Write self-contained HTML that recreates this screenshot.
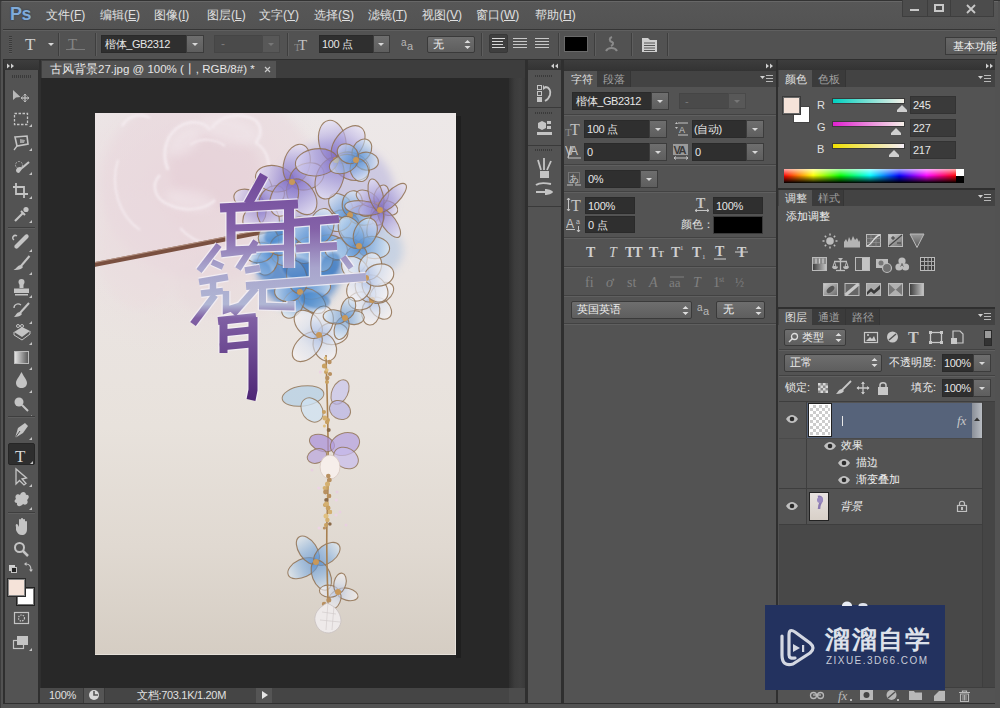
<!DOCTYPE html>
<html><head><meta charset="utf-8">
<style>
*{margin:0;padding:0;box-sizing:border-box}
html,body{width:1000px;height:708px;overflow:hidden;background:#535353;font-family:"Liberation Sans",sans-serif;font-size:12px;color:#e0e0e0}
.a{position:absolute}
.t{position:absolute;white-space:nowrap;line-height:1}
.inp{position:absolute;background:#383838;border:1px solid #2e2e2e}
.btn{position:absolute;background:linear-gradient(#6e6e6e,#5e5e5e);border:1px solid #3c3c3c}
.arr{position:absolute;width:0;height:0;border-left:3px solid transparent;border-right:3px solid transparent;border-top:3px solid #d8d8d8}
.hdr{position:absolute;background:linear-gradient(#3d3d3d,#333)}
.tabs{position:absolute;background:#434343}
.tab{position:absolute;background:#535353;color:#e6e6e6}
.itab{position:absolute;background:#3b3b3b;color:#a8a8a8;border-right:1px solid #353535}
.sepH{position:absolute;height:2px;border-top:1px solid #424242;border-bottom:1px solid #5f5f5f}
</style></head><body>

<!-- window frame -->
<div class="a" style="left:0;top:0;width:1000px;height:708px;background:#525252;border-left:1px solid #3c3c3c"></div>
<!-- menu bar -->
<div class="a" style="left:0;top:0;width:1000px;height:1px;background:#333"></div>
<div class="a" style="left:2px;top:1px;width:996px;height:28px;background:linear-gradient(#575757,#535353);border-top:1px solid #676767"></div>
<!-- options bar -->
<div class="a" style="left:3px;top:29px;width:992px;height:30px;background:#525252;border-top:1px solid #353535;box-shadow:inset 0 1px #5f5f5f"></div>
<!-- dark strip under options bar -->
<div class="a" style="left:3px;top:59px;width:992px;height:645px;background:#2f2f2f"></div>

<!-- left tool panel -->
<div class="hdr" style="left:4px;top:60px;width:35px;height:10px"></div>
<div class="a" style="left:5px;top:70px;width:33px;height:633px;background:#535353"></div>

<!-- doc tab bar -->
<div class="a" style="left:41px;top:60px;width:484px;height:18px;background:#3d3d3d"></div>
<div class="a" style="left:42px;top:61px;width:234px;height:17px;background:#535353"></div>
<!-- canvas area -->
<div class="a" style="left:41px;top:78px;width:468px;height:610px;background:#282828"></div>
<!-- vertical scrollbar -->
<div class="a" style="left:509px;top:78px;width:16px;height:610px;background:linear-gradient(90deg,#2e2e2e,#3c3c3c 35%,#404040 70%,#3a3a3a)"></div>
<!-- status bar -->
<div class="a" style="left:40px;top:688px;width:485px;height:15px;background:#454545"></div>

<!-- icon column -->
<div class="hdr" style="left:528px;top:60px;width:33px;height:10px"></div>
<div class="a" style="left:528px;top:70px;width:33px;height:633px;background:#535353"></div>

<!-- character panel -->
<div class="hdr" style="left:564px;top:60px;width:212px;height:11px"></div>
<div class="tabs" style="left:564px;top:71px;width:212px;height:16px"></div>
<div class="a" style="left:564px;top:87px;width:212px;height:616px;background:#535353"></div>

<!-- right panels -->
<div class="hdr" style="left:778px;top:60px;width:217px;height:10px"></div>
<div class="tabs" style="left:778px;top:70px;width:217px;height:17px"></div>
<div class="a" style="left:778px;top:87px;width:217px;height:101px;background:#535353"></div>
<div class="tabs" style="left:778px;top:190px;width:217px;height:16px"></div>
<div class="a" style="left:778px;top:206px;width:217px;height:101px;background:#535353"></div>
<div class="tabs" style="left:778px;top:309px;width:217px;height:16px"></div>
<div class="a" style="left:778px;top:325px;width:217px;height:378px;background:#535353"></div>


<!-- PS logo -->
<div class="t" style="left:10px;top:5px;font-size:18px;font-weight:bold;color:#80aad8;letter-spacing:-0.6px;text-shadow:0 0 1.5px #1a3050">Ps</div>
<div class="t" style="left:46px;top:9px">文件(<u>F</u>)</div>
<div class="t" style="left:100px;top:9px">编辑(<u>E</u>)</div>
<div class="t" style="left:154px;top:9px">图像(<u>I</u>)</div>
<div class="t" style="left:207px;top:9px">图层(<u>L</u>)</div>
<div class="t" style="left:259px;top:9px">文字(<u>Y</u>)</div>
<div class="t" style="left:314px;top:9px">选择(<u>S</u>)</div>
<div class="t" style="left:368px;top:9px">滤镜(<u>T</u>)</div>
<div class="t" style="left:422px;top:9px">视图(<u>V</u>)</div>
<div class="t" style="left:476px;top:9px">窗口(<u>W</u>)</div>
<div class="t" style="left:535px;top:9px">帮助(<u>H</u>)</div>
<!-- window buttons -->
<div class="a" style="left:902px;top:0px;width:92px;height:17px;border:1px solid #3e3e3e;border-top:none;background:#4c4c4c"></div>
<div class="a" style="left:927px;top:0px;width:1px;height:16px;background:#3e3e3e"></div>
<div class="a" style="left:950px;top:0px;width:1px;height:16px;background:#3e3e3e"></div>
<div class="a" style="left:910px;top:9px;width:9px;height:2px;background:#c8c8c8"></div>
<div class="a" style="left:934px;top:4px;width:10px;height:8px;border:2px solid #c8c8c8"></div>
<svg class="a" style="left:966px;top:4px" width="10" height="10"><path d="M1 1L9 9M9 1L1 9" stroke="#c8c8c8" stroke-width="1.8"/></svg>


<!-- options bar -->
<div class="a" style="left:9px;top:36px;width:3px;height:18px;background:repeating-linear-gradient(#3a3a3a 0 1px,#5a5a5a 1px 2px)"></div>
<div class="t" style="left:25px;top:36px;font-family:'Liberation Serif',serif;font-size:17px;color:#d0d0d0">T</div>
<div class="arr" style="left:48px;top:43px"></div>
<div class="a" style="left:58px;top:33px;width:1px;height:23px;background:#3e3e3e;box-shadow:1px 0 #5e5e5e"></div>
<div class="t" style="left:68px;top:37px;font-family:'Liberation Serif',serif;font-size:15px;color:#858585">T</div>
<div class="a" style="left:66px;top:49px;width:19px;height:1px;background:#7a7a7a"></div>
<div class="a" style="left:95px;top:33px;width:1px;height:23px;background:#3e3e3e;box-shadow:1px 0 #5e5e5e"></div>
<!-- font family -->
<div class="inp" style="left:101px;top:35px;width:86px;height:18px;background:#2f2f2f;border-color:#2a2a2a"></div>
<div class="t" style="left:105px;top:39px;color:#e6e6e6;font-size:11px;letter-spacing:-0.4px">楷体_GB2312</div>
<div class="btn" style="left:186px;top:35px;width:18px;height:18px"></div>
<div class="arr" style="left:192px;top:43px"></div>
<!-- style disabled -->
<div class="inp" style="left:214px;top:35px;width:49px;height:18px;background:#4a4a4a;border-color:#454545"></div>
<div class="t" style="left:221px;top:38px;color:#7a7a7a">-</div>
<div class="btn" style="left:262px;top:35px;width:18px;height:18px;background:#585858;border-color:#4a4a4a"></div>
<div class="arr" style="left:268px;top:43px;border-top-color:#777"></div>
<div class="a" style="left:287px;top:33px;width:1px;height:23px;background:#3e3e3e;box-shadow:1px 0 #5e5e5e"></div>
<!-- size -->
<svg class="a" style="left:294px;top:37px" width="17" height="15"><text x="0" y="14" font-family="Liberation Serif" font-size="11" fill="#8a8a8a">T</text><text x="4" y="13" font-family="Liberation Serif" font-size="15" fill="#c0c0c0">T</text></svg>
<div class="inp" style="left:319px;top:35px;width:55px;height:18px;background:#2f2f2f;border-color:#2a2a2a"></div>
<div class="t" style="left:322px;top:39px;color:#e6e6e6;font-size:11px;letter-spacing:-0.4px">100 点</div>
<div class="btn" style="left:373px;top:35px;width:17px;height:18px"></div>
<div class="arr" style="left:378px;top:43px"></div>
<!-- aa -->
<svg class="a" style="left:401px;top:38px" width="14" height="13"><text x="0" y="8" font-family="Liberation Sans" font-size="10" fill="#b8b8b8">a</text><text x="6" y="12" font-family="Liberation Sans" font-size="11" fill="#b8b8b8">a</text></svg>
<div class="btn" style="left:427px;top:36px;width:48px;height:17px;border-radius:2px;border-color:#3a3a3a"></div>
<div class="t" style="left:433px;top:39px;color:#eee;font-size:11px">无</div>
<svg class="a" style="left:464px;top:39px" width="7" height="11"><path d="M0.5 4L3.5 1L6.5 4ZM0.5 7L3.5 10L6.5 7Z" fill="#dcdcdc"/></svg>
<div class="a" style="left:481px;top:33px;width:1px;height:23px;background:#3e3e3e;box-shadow:1px 0 #5e5e5e"></div>
<!-- align -->
<div class="a" style="left:489px;top:34px;width:19px;height:19px;background:#3f3f3f;border:1px solid #383838;border-radius:2px"></div>
<div class="a" style="left:492px;top:38px;width:13px;height:11px;background:repeating-linear-gradient(#d8d8d8 0 1px,transparent 1px 3px)"></div>
<div class="a" style="left:503px;top:40px;width:2px;height:7px;background:#3f3f3f"></div>
<div class="a" style="left:513px;top:38px;width:14px;height:11px;background:repeating-linear-gradient(#c8c8c8 0 1px,transparent 1px 3px)"></div>
<div class="a" style="left:535px;top:38px;width:14px;height:11px;background:repeating-linear-gradient(#c8c8c8 0 1px,transparent 1px 3px)"></div>
<div class="a" style="left:558px;top:33px;width:1px;height:23px;background:#3e3e3e;box-shadow:1px 0 #5e5e5e"></div>
<div class="a" style="left:564px;top:36px;width:24px;height:16px;background:#000;border:1px solid #6a6a6a"></div>
<div class="a" style="left:594px;top:33px;width:1px;height:23px;background:#3e3e3e;box-shadow:1px 0 #5e5e5e"></div>
<svg class="a" style="left:604px;top:35px" width="15" height="18"><path d="M8 2 C5 3 5 6 8 7 C10 8 9 10 7 11 M2 16 C4 12 11 12 13 16" stroke="#8a8a8a" stroke-width="2" fill="none"/></svg>
<div class="a" style="left:631px;top:33px;width:1px;height:23px;background:#3e3e3e;box-shadow:1px 0 #5e5e5e"></div>
<svg class="a" style="left:641px;top:37px" width="17" height="16"><path d="M1 1H7L9 3H16V15H1Z" fill="#cfcfcf"/><path d="M3 6H14M3 8.5H14M3 11H14M3 13.5H14" stroke="#555" stroke-width="1"/></svg>
<div class="a" style="left:667px;top:33px;width:1px;height:23px;background:#3e3e3e;box-shadow:1px 0 #5e5e5e"></div>
<!-- workspace button -->
<div class="btn" style="left:945px;top:37px;width:52px;height:18px;border-color:#3a3a3a;background:linear-gradient(#666,#5a5a5a)"></div>
<div class="t" style="left:953px;top:41px;color:#f0f0f0;font-size:11px">基本功能</div>


<!-- left toolbar content -->
<svg class="a" style="left:6px;top:63px" width="10" height="6"><path d="M1 0.5L4 3L1 5.5ZM5 0.5L8 3L5 5.5Z" fill="#cfcfcf"/></svg>
<div class="a" style="left:12px;top:75px;width:19px;height:3px;background:repeating-linear-gradient(90deg,#3a3a3a 0 1px,transparent 1px 2px)"></div>
<svg class="a" style="left:5px;top:84px" width="33" height="580" fill="#c4c4c4" stroke="#c4c4c4">
 <g transform="translate(0,0)">
  <!-- move y95 -->
  <path d="M8 6L8 16L11 13.5L15.5 13Z" stroke="none" fill="#b8b8b8"/>
  <path d="M20 10V18M16 14H24" stroke-width="1.3" fill="none" stroke="#b8b8b8"/>
  <path d="M18.5 11.5L20 10L21.5 11.5M18.5 16.5L20 18L21.5 16.5M17.5 12.5L16 14L17.5 15.5M22.5 12.5L24 14L22.5 15.5" stroke-width="1" fill="none" stroke="#b8b8b8"/>
  <!-- marquee y119 -->
  <rect x="9.5" y="29.5" width="13" height="11" fill="none" stroke-width="1.3" stroke-dasharray="2.5 1.5"/>
  <path d="M24 43H27V40Z" stroke="none"/>
  <!-- lasso y143 -->
  <path d="M10 53L22 52L23 60L12 62Z" fill="none" stroke-width="1.6"/>
  <path d="M12 62L9 66" stroke-width="1.3"/>
  <path d="M15 55L20 56L19 59L15 59Z" stroke="none" opacity="0.7"/>
  <path d="M24 67H27V64Z" stroke="none"/>
  <!-- quick selection y167 -->
  <path d="M11 86C12 83 15 82 18 84L14 89C12 89 11 88 11 86Z" stroke="none"/>
  <path d="M17 84L24 78" stroke-width="2.2"/>
  <circle cx="14" cy="81" r="3.5" fill="none" stroke-width="1" stroke-dasharray="2 1" opacity="0.7"/>
  <path d="M24 91H27V88Z" stroke="none"/>
  <!-- crop y190 -->
  <path d="M11 99V110H23M8 103H19V114" fill="none" stroke-width="1.8"/>
  <path d="M24 115H27V112Z" stroke="none"/>
  <!-- eyedropper y214 -->
  <path d="M10 137L18 129" stroke-width="2.2"/>
  <path d="M16 127L20 131" stroke-width="2"/>
  <circle cx="21" cy="125.5" r="2.6" stroke="none"/>
  <path d="M24 139H27V136Z" stroke="none"/>
 </g>
</svg>
<div class="a" style="left:8px;top:227px;width:27px;height:1px;background:#3e3e3e;box-shadow:0 1px #5e5e5e"></div>
<svg class="a" style="left:5px;top:228px" width="33" height="200" fill="#c4c4c4" stroke="#c4c4c4">
  <!-- healing y240 -->
  <path d="M10 17L20 7C22 5 25 8 23 10L13 20C11 22 8 19 10 17Z" stroke="none"/>
  <path d="M12 8C9 6 6 10 9 12" fill="none" stroke-width="1.5"/>
  <path d="M24 24H27V21Z" stroke="none"/>
  <!-- brush y263 -->
  <path d="M24.5 28L16 38" stroke-width="2"/>
  <path d="M16 37C13 37 12 40 8.5 42C13 42.5 17 41 18 39Z" stroke="none"/>
  <path d="M24 47H27V44Z" stroke="none"/>
  <!-- stamp y287 -->
  <path d="M14.5 55H18.5V60H14.5Z M9 60.5H24V65H9Z M10 66H23V67.5H10Z" stroke="none"/>
  <circle cx="16.5" cy="54" r="3" stroke="none"/>
  <path d="M24 70H27V67Z" stroke="none"/>
  <g transform="translate(0,2)"><!-- history brush y310 -->
  <path d="M24 73L15 83" stroke-width="2"/>
  <path d="M15 82C12 82 11 85 9 87C13 87 16 86 17 84Z" stroke="none"/>
  <path d="M9 78C9 74 13 73 16 75" fill="none" stroke-width="1.3"/>
  <path d="M24 94H27V91Z" stroke="none"/>
  </g><!-- eraser y333 -->
  <path d="M9 104L17 99L25 103L17 109Z" stroke="none"/>
  <path d="M9 104V107L17 112L25 106V103" fill="none" stroke-width="1"/>
  <circle cx="13" cy="98" r="1.5" fill="none" stroke-width="1"/><circle cx="17" cy="98" r="1.5" fill="none" stroke-width="1"/>
  <path d="M24 117H27V114Z" stroke="none"/>
  <g transform="translate(0,2)"><!-- gradient y356 -->
  <defs><linearGradient id="gg" x1="0" y1="0" x2="1" y2="0"><stop offset="0" stop-color="#e8e8e8"/><stop offset="1" stop-color="#555"/></linearGradient></defs>
  <rect x="9.5" y="121.5" width="14" height="12" fill="url(#gg)" stroke-width="1" stroke="#bbb"/>
  <path d="M24 140H27V137Z" stroke="none"/>
  </g><g transform="translate(0,1)"><!-- blur drop y379 -->
  <path d="M16.5 143C14 148 11 151 11 154C11 157 13.5 159 16.5 159C19.5 159 22 157 22 154C22 151 19 148 16.5 143Z" stroke="none"/>
  <path d="M24 164H27V161Z" stroke="none"/>
  </g><g transform="translate(0,3)"><!-- dodge y403 -->
  <circle cx="14" cy="171" r="4.5" stroke="none"/>
  <path d="M17 174L23 180" stroke-width="2"/>
  <path d="M24 187H27V184Z" stroke="none"/>
</g></svg>
<div class="a" style="left:8px;top:416px;width:27px;height:1px;background:#3e3e3e;box-shadow:0 1px #5e5e5e"></div>
<!-- type tool selected -->
<div class="a" style="left:8px;top:443px;width:27px;height:22px;background:#2e2e2e;border:1px solid #262626;border-radius:2px"></div>
<svg class="a" style="left:5px;top:417px" width="33" height="260" fill="#c4c4c4" stroke="#c4c4c4">
  <!-- pen y430 -->
  <path d="M10 21L13 11L20 6L23 9L18 16Z" stroke="none"/>
  <path d="M10 21L15 14" stroke="#535353" stroke-width="1"/>
  <path d="M24 23H27V20Z" stroke="none"/>
  <!-- T y454 -->
  <text x="10" y="45" font-family="Liberation Serif" font-size="17" stroke="none" fill="#d8d8d8">T</text>
  <path d="M25 47H28V44Z" stroke="none"/>
  <!-- path select y477 -->
  <path d="M11 52V67L14.5 63.5L19 68L21 66.5L17 62L21.5 61Z" fill="none" stroke-width="1.3"/>
  <path d="M24 70H27V67Z" stroke="none"/>
  <!-- custom shape y501 -->
  <path d="M11 82C9 78 13 76 15 78C16 74 21 74 21 78C24 77 25 81 22 83C24 86 21 89 18 87C16 90 11 90 12 86C9 86 9 83 11 82Z" stroke="none"/>
  <path d="M24 93H27V90Z" stroke="none"/>
</svg>
<div class="a" style="left:8px;top:512px;width:27px;height:1px;background:#3e3e3e;box-shadow:0 1px #5e5e5e"></div>
<svg class="a" style="left:5px;top:514px" width="33" height="150" fill="#c4c4c4" stroke="#c4c4c4">
  <!-- hand y528 -->
  <path d="M11 13C10 10 12 9 13 11L14 13V6C14 4.5 16 4.5 16 6V11V5C16 3.5 18 3.5 18 5V11V6C18 4.5 20 4.5 20 6V12V8C20 6.5 22 6.5 22 8V15C22 19 20 21 17 21C14 21 12 19 11 16Z" stroke="none"/>
  <!-- zoom y550 -->
  <circle cx="14.5" cy="33.5" r="4.5" fill="none" stroke-width="2"/>
  <path d="M18 37L23 42" stroke-width="2.5"/>
  <!-- default colors y569 -->
  <rect x="4" y="51" width="6" height="6" stroke="none" fill="#cfcfcf"/>
  <rect x="6.5" y="53.5" width="5" height="5" stroke-width="1" fill="#222"/>
  <path d="M21 50C25 50 26 52 26 56" fill="none" stroke-width="1.2"/>
  <path d="M19 50L21.5 48V52Z M24 55.5H28L26 58Z" stroke="none"/>
</svg>
<!-- fg/bg colors -->
<div class="a" style="left:17px;top:588px;width:17px;height:17px;background:#fff;border:1px solid #777;box-shadow:0 0 0 1px #222"></div>
<div class="a" style="left:8px;top:579px;width:17px;height:17px;background:#f5e3d9;border:1px solid #888;box-shadow:0 0 0 1px #2a2a2a"></div>
<svg class="a" style="left:5px;top:605px" width="33" height="50" fill="#c4c4c4" stroke="#c4c4c4">
  <!-- quick mask y618 -->
  <rect x="9.5" y="7.5" width="14" height="11" fill="none" stroke-width="1.2"/>
  <circle cx="16.5" cy="13" r="3" fill="none" stroke-width="1.2" stroke-dasharray="1.5 1"/>
  <!-- screen mode y644 -->
  <rect x="8.5" y="35.5" width="10" height="8" fill="none" stroke-width="1.2"/>
  <rect x="12" y="31" width="11" height="9" stroke="none"/>
  <path d="M24 46H27V43Z" stroke="none"/>
</svg>

<!-- doc tab -->
<div class="t" style="left:50px;top:64px;color:#e6e6e6;font-size:11.5px">古风背景27.jpg @ 100% (丨, RGB/8#) *</div>
<svg class="a" style="left:264px;top:66px" width="7" height="7"><path d="M1 1L6 6M6 1L1 6" stroke="#c8c8c8" stroke-width="1.2"/></svg>

<!-- status bar -->
<div class="a" style="left:40px;top:688px;width:43px;height:15px;background:#4a4a4a"></div>
<div class="t" style="left:49px;top:690px;color:#e0e0e0;font-size:11px;letter-spacing:-0.3px">100%</div>
<div class="a" style="left:83px;top:688px;width:22px;height:15px;background:#555;border-left:1px solid #3a3a3a;border-right:1px solid #3a3a3a"></div>
<svg class="a" style="left:88px;top:689px" width="12" height="12"><circle cx="6" cy="6" r="5" fill="#d8d8d8"/><path d="M6 2V6H10" stroke="#555" stroke-width="1.6" fill="none"/></svg>
<div class="t" style="left:137px;top:690px;color:#e0e0e0;font-size:11px;letter-spacing:-0.3px">文档:703.1K/1.20M</div>
<div class="a" style="left:256px;top:688px;width:16px;height:15px;background:#555"></div>
<svg class="a" style="left:261px;top:690px" width="8" height="10"><path d="M1 1L7 5L1 9Z" fill="#e6e6e6"/></svg>
<div class="a" style="left:509px;top:688px;width:16px;height:15px;background:#4c4c4c"></div>


<!-- icon column content -->
<svg class="a" style="left:550px;top:63px" width="10" height="6"><path d="M4 0.5L1 3L4 5.5ZM8 0.5L5 3L8 5.5Z" fill="#cfcfcf"/></svg>
<div class="a" style="left:528px;top:107px;width:33px;height:1px;background:#3a3a3a"></div>
<div class="a" style="left:528px;top:145px;width:33px;height:1px;background:#3a3a3a"></div>
<div class="a" style="left:528px;top:206px;width:33px;height:1px;background:#3a3a3a"></div>
<div class="a" style="left:535px;top:75px;width:18px;height:2px;background:repeating-linear-gradient(90deg,#3a3a3a 0 1px,transparent 1px 2px)"></div>
<div class="a" style="left:535px;top:112px;width:18px;height:2px;background:repeating-linear-gradient(90deg,#3a3a3a 0 1px,transparent 1px 2px)"></div>
<div class="a" style="left:535px;top:149px;width:18px;height:2px;background:repeating-linear-gradient(90deg,#3a3a3a 0 1px,transparent 1px 2px)"></div>
<svg class="a" style="left:528px;top:80px" width="33" height="125" fill="#c4c4c4" stroke="#c4c4c4">
  <!-- history -->
  <rect x="9.5" y="5.5" width="4" height="4" fill="none" stroke-width="1"/>
  <rect x="9.5" y="11.5" width="4" height="4" fill="none" stroke-width="1"/>
  <rect x="9" y="17" width="5" height="5" stroke="none"/>
  <path d="M17 7C22 7 23 12 22 15C21 18 19 20 17 21" fill="none" stroke-width="1.8"/>
  <path d="M15 5L18 8L15 10Z" stroke="none"/>
  <!-- properties -->
  <path d="M10 43L14 41L18 43V48L14 50L10 48Z" stroke="none"/>
  <rect x="19" y="41" width="4" height="3" stroke="none"/><rect x="19" y="46" width="4" height="3" stroke="none"/>
  <rect x="9" y="52" width="15" height="3" stroke="none"/>
  <!-- brush -->
  <path d="M12 91H21V98H12Z" stroke="none"/>
  <path d="M13 90L10 80M16 90V78M19 90L23 81" stroke-width="1.8"/>
  <!-- brush presets -->
  <path d="M8 105C12 102 18 103 23 104" stroke-width="2" fill="none"/>
  <path d="M8 112H17" stroke-width="2"/>
  <path d="M17 109C20 109 24 110 25 112C24 114 20 115 17 115Z" stroke="none"/>
</svg>

<!-- character panel content -->
<div class="tab" style="left:564px;top:71px;width:33px;height:16px"></div>
<div class="itab" style="left:597px;top:71px;width:34px;height:16px"></div>
<div class="t" style="left:571px;top:74px;font-size:11px">字符</div>
<div class="t" style="left:603px;top:74px;font-size:11px;color:#a0a0a0">段落</div>
<svg class="a" style="left:765px;top:63px" width="10" height="6"><path d="M1 0.5L4 3L1 5.5ZM5 0.5L8 3L5 5.5Z" fill="#cfcfcf"/></svg>
<svg class="a" style="left:760px;top:74px" width="14" height="9"><path d="M0 2H5L2.5 5Z" fill="#d0d0d0"/><path d="M6 1.5H13M6 4.5H13M6 7.5H13" stroke="#b8b8b8" stroke-width="1.2"/></svg>

<div class="inp" style="left:572px;top:92px;width:80px;height:18px;background:#2f2f2f;border-color:#2a2a2a"></div>
<div class="t" style="left:576px;top:96px;font-size:11px;letter-spacing:-0.4px;color:#e6e6e6">楷体_GB2312</div>
<div class="btn" style="left:651px;top:92px;width:18px;height:18px"></div>
<div class="arr" style="left:657px;top:100px"></div>
<div class="inp" style="left:679px;top:93px;width:50px;height:16px;background:#4a4a4a;border-color:#454545"></div>
<div class="t" style="left:685px;top:96px;font-size:11px;color:#7a7a7a">-</div>
<div class="btn" style="left:728px;top:93px;width:18px;height:16px;background:#585858;border-color:#4a4a4a"></div>
<div class="arr" style="left:734px;top:100px;border-top-color:#777"></div>
<div class="sepH" style="left:564px;top:114px;width:212px"></div>

<!-- size row -->
<svg class="a" style="left:565px;top:121px" width="18" height="16"><text x="0" y="15" font-family="Liberation Serif" font-size="11" fill="#8a8a8a">T</text><text x="5" y="14" font-family="Liberation Serif" font-size="16" fill="#c0c0c0">T</text></svg>
<div class="inp" style="left:584px;top:120px;width:66px;height:18px;background:#2f2f2f;border-color:#2a2a2a"></div>
<div class="t" style="left:587px;top:124px;font-size:11px;letter-spacing:-0.4px;color:#e6e6e6">100 点</div>
<div class="btn" style="left:649px;top:120px;width:18px;height:18px"></div>
<div class="arr" style="left:655px;top:128px"></div>
<svg class="a" style="left:673px;top:121px" width="16" height="16" fill="#c4c4c4"><path d="M5 2H15M5 14H15" stroke="#c4c4c4" stroke-width="1.2"/><text x="6" y="12" font-size="9" font-family="Liberation Sans">A</text><path d="M2 3L3.5 1L5 3ZM2 6L3.5 8L5 6Z"/></svg>
<div class="inp" style="left:692px;top:120px;width:55px;height:18px;background:#2f2f2f;border-color:#2a2a2a"></div>
<div class="t" style="left:694px;top:124px;font-size:11px;letter-spacing:-0.4px;color:#e6e6e6">(自动)</div>
<div class="btn" style="left:746px;top:120px;width:18px;height:18px"></div>
<div class="arr" style="left:752px;top:128px"></div>
<!-- kerning row -->
<svg class="a" style="left:565px;top:144px" width="18" height="16"><text x="0" y="11" font-family="Liberation Sans" font-size="12" fill="#c4c4c4" letter-spacing="-2">VA</text><path d="M3 14H16" stroke="#c4c4c4" stroke-width="1"/><path d="M6 2L3 14" stroke="#c4c4c4" stroke-width="1.3"/></svg>
<div class="inp" style="left:584px;top:143px;width:66px;height:18px;background:#2f2f2f;border-color:#2a2a2a"></div>
<div class="t" style="left:587px;top:147px;font-size:11px;color:#e6e6e6">0</div>
<div class="btn" style="left:649px;top:143px;width:18px;height:18px"></div>
<div class="arr" style="left:655px;top:151px"></div>
<svg class="a" style="left:673px;top:144px" width="16" height="16"><rect x="0" y="0" width="15" height="11" fill="#9a9a9a"/><text x="0.5" y="10" font-family="Liberation Sans" font-weight="bold" font-size="11" fill="#3a3a3a" letter-spacing="-1.5">VA</text><path d="M1 14H15M1 14L3 12.5M1 14L3 15.5M15 14L13 12.5M15 14L13 15.5" stroke="#c4c4c4" stroke-width="1"/></svg>
<div class="inp" style="left:692px;top:143px;width:55px;height:18px;background:#2f2f2f;border-color:#2a2a2a"></div>
<div class="t" style="left:695px;top:147px;font-size:11px;color:#e6e6e6">0</div>
<div class="btn" style="left:746px;top:143px;width:18px;height:18px"></div>
<div class="arr" style="left:752px;top:151px"></div>
<div class="sepH" style="left:564px;top:164px;width:212px"></div>
<!-- tsume row -->
<svg class="a" style="left:566px;top:171px" width="16" height="16"><rect x="2.5" y="1.5" width="11" height="10" fill="none" stroke="#9a9a9a" stroke-dasharray="1 1"/><text x="3" y="11" font-size="10" fill="#c4c4c4" font-family="Liberation Sans">あ</text><path d="M1 14H7M9 14H15" stroke="#c4c4c4"/></svg>
<div class="inp" style="left:585px;top:170px;width:56px;height:18px;background:#2f2f2f;border-color:#2a2a2a"></div>
<div class="t" style="left:588px;top:174px;font-size:11px;letter-spacing:-0.3px;color:#e6e6e6">0%</div>
<div class="btn" style="left:640px;top:170px;width:18px;height:18px"></div>
<div class="arr" style="left:646px;top:178px"></div>
<div class="sepH" style="left:564px;top:191px;width:212px"></div>
<!-- scale rows -->
<svg class="a" style="left:566px;top:197px" width="17" height="16"><path d="M2.5 1V14M1 3L2.5 1L4 3M1 12L2.5 14L4 12" stroke="#c4c4c4" fill="none"/><text x="5" y="14" font-family="Liberation Serif" font-size="16" fill="#c4c4c4">T</text></svg>
<div class="inp" style="left:585px;top:197px;width:50px;height:17px;background:#2f2f2f;border-color:#2a2a2a"></div>
<div class="t" style="left:588px;top:201px;font-size:11px;letter-spacing:-0.3px;color:#e6e6e6">100%</div>
<svg class="a" style="left:566px;top:216px" width="17" height="17"><text x="0" y="12" font-family="Liberation Sans" font-size="12" fill="#c4c4c4">A</text><path d="M0 13.5H9" stroke="#c4c4c4"/><text x="10" y="8" font-size="7" fill="#c4c4c4" font-family="Liberation Sans">a</text><path d="M12.5 10V16M11 14L12.5 16L14 14" stroke="#c4c4c4" fill="none"/></svg>
<div class="inp" style="left:585px;top:216px;width:50px;height:17px;background:#2f2f2f;border-color:#2a2a2a"></div>
<div class="t" style="left:588px;top:220px;font-size:11px;letter-spacing:-0.3px;color:#e6e6e6">0 点</div>
<svg class="a" style="left:694px;top:197px" width="17" height="15"><text x="2" y="11" font-family="Liberation Serif" font-weight="bold" font-size="14" fill="#c4c4c4">T</text><path d="M1 13.5H15M1 13.5L3 12M1 13.5L3 15M15 13.5L13 12M15 13.5L13 15" stroke="#c4c4c4" stroke-width="1"/></svg>
<div class="inp" style="left:713px;top:197px;width:50px;height:17px;background:#2f2f2f;border-color:#2a2a2a"></div>
<div class="t" style="left:716px;top:201px;font-size:11px;letter-spacing:-0.3px;color:#e6e6e6">100%</div>
<div class="t" style="left:681px;top:219px;font-size:11px;color:#e0e0e0">颜色：</div>
<div class="a" style="left:713px;top:216px;width:50px;height:18px;background:#000;border:1px solid #3a3a3a"></div>
<div class="sepH" style="left:564px;top:237px;width:212px"></div>
<!-- style buttons -->
<svg class="a" style="left:580px;top:243px" width="180" height="18" font-family="Liberation Serif" fill="#cfcfcf">
  <text x="6" y="14" font-size="14" font-weight="bold">T</text>
  <text x="29" y="14" font-size="14" font-style="italic">T</text>
  <text x="45" y="14" font-size="14" font-weight="bold" letter-spacing="-1">TT</text>
  <text x="69" y="14" font-size="14" font-weight="bold">T</text><text x="78" y="14" font-size="9" font-weight="bold">T</text>
  <text x="91" y="14" font-size="14" font-weight="bold">T</text><text x="100" y="7" font-size="7">1</text>
  <text x="112" y="14" font-size="14" font-weight="bold">T</text><text x="122" y="16" font-size="7">1</text>
  <text x="135" y="13" font-size="14" font-weight="bold">T</text><path d="M134 16H146" stroke="#cfcfcf"/>
  <text x="157" y="14" font-size="14" font-weight="bold">T</text><path d="M155 9H168" stroke="#cfcfcf"/>
</svg>
<div class="sepH" style="left:564px;top:266px;width:212px"></div>
<svg class="a" style="left:580px;top:272px" width="180" height="18" font-family="Liberation Serif" fill="#808080">
  <text x="5" y="15" font-size="14">fi</text>
  <text x="26" y="15" font-size="14" font-style="italic">ơ</text>
  <text x="47" y="15" font-size="14">st</text>
  <text x="69" y="15" font-size="14" font-style="italic">A</text>
  <text x="89" y="15" font-size="13">aa</text><path d="M90 5H104" stroke="#808080"/>
  <text x="113" y="15" font-size="14" font-style="italic">T</text>
  <text x="133" y="15" font-size="14">1</text><text x="139" y="10" font-size="8">st</text>
  <text x="155" y="15" font-size="12">½</text>
</svg>
<div class="sepH" style="left:564px;top:295px;width:212px"></div>
<div class="btn" style="left:571px;top:301px;width:121px;height:18px;border-radius:2px;border-color:#3a3a3a"></div>
<div class="t" style="left:577px;top:304px;font-size:11px;color:#eee">英国英语</div>
<svg class="a" style="left:682px;top:305px" width="7" height="11"><path d="M0.5 4L3.5 1L6.5 4ZM0.5 7L3.5 10L6.5 7Z" fill="#dcdcdc"/></svg>
<svg class="a" style="left:697px;top:303px" width="14" height="13"><text x="0" y="8" font-family="Liberation Sans" font-size="10" fill="#b8b8b8">a</text><text x="6" y="12" font-family="Liberation Sans" font-size="11" fill="#b8b8b8">a</text></svg>
<div class="btn" style="left:716px;top:301px;width:49px;height:18px;border-radius:2px;border-color:#3a3a3a"></div>
<div class="t" style="left:723px;top:304px;font-size:11px;color:#eee">无</div>
<svg class="a" style="left:755px;top:305px" width="7" height="11"><path d="M0.5 4L3.5 1L6.5 4ZM0.5 7L3.5 10L6.5 7Z" fill="#dcdcdc"/></svg>
<div class="sepH" style="left:564px;top:323px;width:212px"></div>


<!-- color panel -->
<svg class="a" style="left:985px;top:63px" width="10" height="6"><path d="M1 0.5L4 3L1 5.5ZM5 0.5L8 3L5 5.5Z" fill="#cfcfcf"/></svg>
<div class="tab" style="left:779px;top:70px;width:33px;height:17px"></div>
<div class="itab" style="left:812px;top:70px;width:34px;height:17px"></div>
<div class="t" style="left:785px;top:74px;font-size:11px">颜色</div>
<div class="t" style="left:818px;top:74px;font-size:11px;color:#a0a0a0">色板</div>
<svg class="a" style="left:978px;top:74px" width="14" height="9"><path d="M0 2H5L2.5 5Z" fill="#d0d0d0"/><path d="M6 1.5H13M6 4.5H13M6 7.5H13" stroke="#b8b8b8" stroke-width="1.2"/></svg>
<div class="a" style="left:793px;top:106px;width:17px;height:17px;background:#fff;border:1px solid #444"></div>
<div class="a" style="left:783px;top:97px;width:17px;height:17px;background:#f5e3d9;border:1px solid #6a6a6a;box-shadow:0 0 0 1px #3a3a3a"></div>
<div class="t" style="left:817px;top:100px;font-size:11px;color:#e0e0e0">R</div>
<div class="t" style="left:817px;top:122px;font-size:11px;color:#e0e0e0">G</div>
<div class="t" style="left:817px;top:144px;font-size:11px;color:#e0e0e0">B</div>
<div class="a" style="left:832px;top:98px;width:73px;height:6px;background:linear-gradient(90deg,#00d0c0,#f5f0e8);border:1px solid #3a3a3a"></div>
<div class="a" style="left:832px;top:121px;width:73px;height:6px;background:linear-gradient(90deg,#e020d0,#f5f0e8);border:1px solid #3a3a3a"></div>
<div class="a" style="left:832px;top:143px;width:73px;height:6px;background:linear-gradient(90deg,#f0e000,#f5eef8);border:1px solid #3a3a3a"></div>
<svg class="a" style="left:896px;top:105px" width="12" height="8"><path d="M6 0L11 5V7H1V5Z" fill="#cfcfcf"/></svg>
<svg class="a" style="left:890px;top:128px" width="12" height="8"><path d="M6 0L11 5V7H1V5Z" fill="#cfcfcf"/></svg>
<svg class="a" style="left:888px;top:150px" width="12" height="8"><path d="M6 0L11 5V7H1V5Z" fill="#cfcfcf"/></svg>
<div class="inp" style="left:910px;top:96px;width:46px;height:18px;background:#3a3a3a;border-color:#333"></div>
<div class="inp" style="left:910px;top:119px;width:46px;height:18px;background:#3a3a3a;border-color:#333"></div>
<div class="inp" style="left:910px;top:141px;width:46px;height:18px;background:#3a3a3a;border-color:#333"></div>
<div class="t" style="left:913px;top:100px;font-size:11px;letter-spacing:-0.3px;color:#e6e6e6">245</div>
<div class="t" style="left:913px;top:123px;font-size:11px;letter-spacing:-0.3px;color:#e6e6e6">227</div>
<div class="t" style="left:913px;top:145px;font-size:11px;letter-spacing:-0.3px;color:#e6e6e6">217</div>
<div class="a" style="left:784px;top:169px;width:172px;height:14px;background:linear-gradient(#fff0,#0000 45%,#000 100%),linear-gradient(90deg,#f00,#ff0 17%,#0f0 33%,#0ff 50%,#00f 67%,#f0f 83%,#f00);"></div>
<div class="a" style="left:784px;top:169px;width:172px;height:7px;background:linear-gradient(#ffffffaa,#fff0)"></div>
<div class="a" style="left:956px;top:169px;width:8px;height:7px;background:#fff"></div>
<div class="a" style="left:956px;top:176px;width:8px;height:7px;background:#000"></div>

<!-- adjustments panel -->
<div class="tab" style="left:779px;top:190px;width:33px;height:16px"></div>
<div class="itab" style="left:812px;top:190px;width:32px;height:16px"></div>
<div class="t" style="left:785px;top:193px;font-size:11px">调整</div>
<div class="t" style="left:818px;top:193px;font-size:11px;color:#a0a0a0">样式</div>
<svg class="a" style="left:978px;top:193px" width="14" height="9"><path d="M0 2H5L2.5 5Z" fill="#d0d0d0"/><path d="M6 1.5H13M6 4.5H13M6 7.5H13" stroke="#b8b8b8" stroke-width="1.2"/></svg>
<div class="t" style="left:786px;top:211px;font-size:11px;color:#f0f0f0">添加调整</div>
<svg class="a" style="left:778px;top:228px" width="217" height="75" fill="#bdbdbd" stroke="#bdbdbd">
  <defs>
   <linearGradient id="ag1" x1="0" y1="0" x2="1" y2="1"><stop offset="0" stop-color="#d0d0d0"/><stop offset="1" stop-color="#6a6a6a"/></linearGradient>
   <linearGradient id="ag2" x1="0" y1="0" x2="1" y2="0"><stop offset="0" stop-color="#3a3a3a"/><stop offset="1" stop-color="#c8c8c8"/></linearGradient>
   <linearGradient id="ag3" x1="0" y1="0" x2="0" y2="1"><stop offset="0" stop-color="#9a9a9a"/><stop offset="1" stop-color="#555"/></linearGradient>
  </defs>
  <!-- row1 -->
  <circle cx="52" cy="13" r="3.8" stroke="none"/>
  <path d="M52 5.5V7.5M52 18.5V20.5M44.5 13H46.5M57.5 13H59.5M46.8 7.8L48.2 9.2M55.8 16.8L57.2 18.2M57.2 7.8L55.8 9.2M48.2 16.8L46.8 18.2" stroke-width="1.5"/>
  <path d="M66 19.5V14L68 11L69.5 14L71 9L73 13L75 8L77 12L79 10L81 14L82 12V19.5Z" stroke="none" fill="#b4b4b4"/>
  <rect x="88.5" y="6.5" width="14" height="12" fill="#6a6a6a" stroke-width="1" stroke="#bbb"/><path d="M88.5 10.5H102.5M88.5 14.5H102.5M93 6.5V18.5M98 6.5V18.5" stroke-width="0.6" stroke="#999"/><path d="M89 18C94 17 96 8 102 7" fill="none" stroke-width="1.3" stroke="#ddd"/>
  <rect x="110.5" y="6.5" width="14" height="12" fill="url(#ag1)" stroke-width="1" stroke="#bbb"/><path d="M111 18L124 7" stroke-width="1.2" stroke="#444"/><path d="M113 10H117M115 8V12M119 15H123" stroke-width="0.9" stroke="#333"/>
  <path d="M132 6H146L139 19.5Z" fill="url(#ag3)" stroke="#bbb" stroke-width="1"/>
  <!-- row2 -->
  <rect x="34.5" y="29.5" width="14" height="13" fill="url(#ag2)" stroke="#bbb" stroke-width="1"/><path d="M35 30H48V36H35Z" stroke="none" fill="#8a8a8a"/><path d="M38 30.5V35.5M41.5 30.5V35.5M45 30.5V35.5" stroke="#ccc" stroke-width="1.2"/>
  <path d="M62.5 31V42M56 33.5H69" stroke-width="1.3" fill="none"/><path d="M60 30L62.5 33L65 30Z" stroke="none"/><path d="M55 38.5L56.5 34L58 38.5ZM67 38.5L68.5 34L70 38.5Z" fill="none" stroke-width="1"/><path d="M54 38.5C54 42 60 42 60 38.5ZM65 38.5C65 42 71 42 71 38.5Z" stroke="none"/><path d="M58 42.5H67" stroke-width="1.3"/>
  <rect x="77.5" y="29.5" width="14" height="13" fill="#5a5a5a" stroke="#bbb" stroke-width="1"/><rect x="84" y="30" width="7" height="12" stroke="none" fill="#c4c4c4"/>
  <rect x="98" y="31" width="12" height="9" stroke="none"/><circle cx="109" cy="40" r="4.5" fill="#707070" stroke="#bbb" stroke-width="1.2"/><circle cx="103" cy="35" r="2.5" fill="#777" stroke="none"/>
  <circle cx="124" cy="33" r="3.6" stroke="none"/><circle cx="121" cy="39" r="3.6" stroke="none"/><circle cx="127.5" cy="39" r="3.6" stroke="none"/><path d="M124 35V38M122.5 38.5L124 36.5L125.5 38.5" stroke="#6a6a6a" stroke-width="1" fill="none"/>
  <rect x="142.5" y="29.5" width="14" height="13" fill="#404040" stroke="#bbb" stroke-width="1"/><path d="M143 33.5H156M143 37.5H156M146.5 30V42M150 30V42M153.5 30V42" stroke-width="1" stroke="#aaa"/>
  <!-- row3 -->
  <rect x="45.5" y="55.5" width="14" height="12" fill="url(#ag1)" stroke="#bbb" stroke-width="1"/><ellipse cx="52.5" cy="61.5" rx="4.5" ry="2.5" transform="rotate(-40 52.5 61.5)" fill="#555" stroke="none"/>
  <rect x="67" y="55.5" width="14" height="12" fill="#666" stroke="#bbb" stroke-width="1"/><path d="M67.5 67L80.5 56" stroke="#c8c8c8" stroke-width="3"/>
  <rect x="88.5" y="55.5" width="14" height="12" fill="#aaa" stroke="#bbb" stroke-width="1"/><path d="M89 64L93 60L96 62.5L102 57V61L96 66L93 63.5L89 67Z" stroke="none" fill="#3a3a3a"/>
  <rect x="110.5" y="55.5" width="14" height="12" fill="#777" stroke="#bbb" stroke-width="1"/><path d="M111 56L117.5 62L124 56ZM111 67L117.5 61.5L124 67Z" stroke="none" fill="#b0b0b0"/>
  <rect x="131.5" y="55.5" width="14" height="12" fill="url(#ag2)" stroke="#bbb" stroke-width="1"/>
</svg>

<!-- layers panel -->
<div class="tab" style="left:779px;top:309px;width:33px;height:16px"></div>
<div class="itab" style="left:812px;top:309px;width:34px;height:16px"></div>
<div class="itab" style="left:846px;top:309px;width:34px;height:16px"></div>
<div class="t" style="left:785px;top:312px;font-size:11px">图层</div>
<div class="t" style="left:818px;top:312px;font-size:11px;color:#a0a0a0">通道</div>
<div class="t" style="left:852px;top:312px;font-size:11px;color:#a0a0a0">路径</div>
<svg class="a" style="left:978px;top:312px" width="14" height="9"><path d="M0 2H5L2.5 5Z" fill="#d0d0d0"/><path d="M6 1.5H13M6 4.5H13M6 7.5H13" stroke="#b8b8b8" stroke-width="1.2"/></svg>
<div class="btn" style="left:784px;top:329px;width:62px;height:17px;border-radius:2px;border-color:#3a3a3a"></div>
<svg class="a" style="left:788px;top:332px" width="11" height="11"><circle cx="6.5" cy="4.5" r="3" fill="none" stroke="#ddd" stroke-width="1.3"/><path d="M4.5 6.5L1 10" stroke="#ddd" stroke-width="1.5"/></svg>
<div class="t" style="left:802px;top:332px;font-size:11px;color:#eee">类型</div>
<svg class="a" style="left:835px;top:332px" width="7" height="11"><path d="M0.5 4L3.5 1L6.5 4ZM0.5 7L3.5 10L6.5 7Z" fill="#dcdcdc"/></svg>
<svg class="a" style="left:860px;top:328px" width="110" height="18" fill="#c8c8c8" stroke="#c8c8c8">
  <rect x="4.5" y="4.5" width="13" height="10" fill="none" stroke-width="1.2"/><path d="M6 13L10 9L12 11L14 8L16 13Z" stroke="none"/><circle cx="8" cy="7" r="1" stroke="none"/>
  <circle cx="32.5" cy="9" r="5.5" stroke="none"/><path d="M29 12L36 6" stroke="#535353" stroke-width="1.5"/>
  <text x="48" y="15" font-family="Liberation Serif" font-size="16" font-weight="bold" stroke="none">T</text>
  <rect x="70.5" y="4.5" width="11" height="10" fill="none" stroke-width="1.3"/><rect x="69" y="3" width="3" height="3" stroke="none"/><rect x="80" y="3" width="3" height="3" stroke="none"/><rect x="69" y="13" width="3" height="3" stroke="none"/><rect x="80" y="13" width="3" height="3" stroke="none"/>
  <path d="M93 3H100L103 6V15H93Z" fill="none" stroke-width="1.2"/><rect x="91" y="10" width="6" height="6" stroke="none"/>
</svg>
<div class="a" style="left:984px;top:330px;width:8px;height:16px;background:#333;border:1px solid #2a2a2a"></div>
<div class="a" style="left:985px;top:331px;width:6px;height:7px;background:#9a9a9a"></div>
<div class="sepH" style="left:779px;top:349px;width:216px"></div>
<div class="btn" style="left:784px;top:354px;width:98px;height:18px;border-radius:2px;border-color:#3a3a3a"></div>
<div class="t" style="left:790px;top:357px;font-size:11px;color:#eee">正常</div>
<svg class="a" style="left:871px;top:357px" width="7" height="11"><path d="M0.5 4L3.5 1L6.5 4ZM0.5 7L3.5 10L6.5 7Z" fill="#dcdcdc"/></svg>
<div class="t" style="left:889px;top:357px;font-size:11px;color:#eee">不透明度:</div>
<div class="inp" style="left:942px;top:354px;width:32px;height:18px;background:#2f2f2f;border-color:#2a2a2a"></div>
<div class="t" style="left:944px;top:358px;font-size:11px;letter-spacing:-0.4px;color:#e6e6e6">100%</div>
<div class="btn" style="left:973px;top:354px;width:18px;height:18px"></div>
<div class="arr" style="left:979px;top:362px"></div>
<div class="sepH" style="left:779px;top:375px;width:216px"></div>
<div class="t" style="left:785px;top:382px;font-size:11px;color:#eee">锁定:</div>
<svg class="a" style="left:815px;top:379px" width="80" height="17" fill="#c8c8c8" stroke="#c8c8c8">
  <rect x="3" y="4" width="10" height="10" fill="#8a8a8a" stroke="none"/><path d="M3 4H5.5V6.5H3ZM8 4H10.5V6.5H8ZM5.5 6.5H8V9H5.5ZM10.5 6.5H13V9H10.5ZM3 9H5.5V11.5H3ZM8 9H10.5V11.5H8ZM5.5 11.5H8V14H5.5ZM10.5 11.5H13V14H10.5Z" stroke="none" fill="#d8d8d8"/>
  <path d="M36 2L27 11" stroke-width="1.8"/><path d="M27 10C24 10 23 13 21 15C25 15 28 14 29 12Z" stroke="none"/>
  <path d="M48 3V15M42 9H54" stroke-width="1.3"/><path d="M46 5L48 2.5L50 5ZM46 13L48 15.5L50 13ZM44 7L41.5 9L44 11ZM52 7L54.5 9L52 11Z" stroke="none"/>
  <rect x="63" y="8" width="10" height="8" stroke="none"/><path d="M65 8V6C65 3 71 3 71 6V8" fill="none" stroke-width="1.5"/>
</svg>
<div class="t" style="left:911px;top:382px;font-size:11px;color:#eee">填充:</div>
<div class="inp" style="left:942px;top:379px;width:32px;height:18px;background:#2f2f2f;border-color:#2a2a2a"></div>
<div class="t" style="left:944px;top:383px;font-size:11px;letter-spacing:-0.4px;color:#e6e6e6">100%</div>
<div class="btn" style="left:973px;top:379px;width:18px;height:18px"></div>
<div class="arr" style="left:979px;top:387px"></div>
<!-- layer list -->
<div class="a" style="left:779px;top:401px;width:216px;height:1px;background:#3e3e3e"></div>
<div class="a" style="left:806px;top:402px;width:1px;height:123px;background:#3e3e3e"></div>
<div class="a" style="left:779px;top:525px;width:203px;height:162px;background:#484848"></div>
<div class="a" style="left:982px;top:402px;width:13px;height:285px;background:#454545;border-left:1px solid #3e3e3e"></div>
<div class="a" style="left:807px;top:403px;width:165px;height:35px;background:#56637a"></div>
<div class="a" style="left:972px;top:403px;width:10px;height:35px;background:linear-gradient(90deg,#8a8f98,#b8bcc2)"></div>
<svg class="a" style="left:974px;top:417px" width="6" height="4"><path d="M0 4L3 0.5L6 4Z" fill="#333"/></svg>
<div class="a" style="left:809px;top:404px;width:22px;height:32px;background-color:#fff;background-image:linear-gradient(45deg,#ccc 25%,transparent 25%,transparent 75%,#ccc 75%),linear-gradient(45deg,#ccc 25%,transparent 25%,transparent 75%,#ccc 75%);background-size:6px 6px;background-position:0 0,3px 3px;border:1px solid #fff;outline:1px solid #222"></div>
<div class="a" style="left:842px;top:416px;width:1px;height:10px;background:#e8e8e8"></div>
<div class="t" style="left:957px;top:414px;font-size:13px;font-style:italic;color:#c8c8c8;font-family:'Liberation Serif',serif">fx</div>
<div class="a" style="left:779px;top:438px;width:203px;height:1px;background:#4a4a4a"></div>
<div class="a" style="left:806px;top:488px;width:176px;height:1px;background:#3e3e3e"></div>
<div class="a" style="left:779px;top:488px;width:27px;height:1px;background:#3e3e3e"></div>
<div class="a" style="left:779px;top:524px;width:203px;height:1px;background:#3e3e3e"></div>
<svg class="a" style="left:779px;top:400px" width="120" height="120" fill="#c0c0c0">
  <g id="eye"><path d="M7 19C9 16 11 15 13 15C15 15 17 16 19 19C17 22 15 23 13 23C11 23 9 22 7 19Z"/><circle cx="13" cy="19" r="2.3" fill="#2a2a2a"/></g>
  <use href="#eye" x="38" y="27"/>
  <use href="#eye" x="52" y="44"/>
  <use href="#eye" x="52" y="61"/>
  <use href="#eye" x="0" y="87"/>
</svg>
<div class="t" style="left:841px;top:440px;font-size:11px;color:#eee">效果</div>
<div class="t" style="left:856px;top:457px;font-size:11px;color:#eee">描边</div>
<div class="t" style="left:856px;top:474px;font-size:11px;color:#eee">渐变叠加</div>
<div class="a" style="left:809px;top:492px;width:20px;height:29px;background:linear-gradient(#e8e2e0,#d8d0c8);border:1px solid #222"></div>
<svg class="a" style="left:810px;top:493px" width="18" height="27"><path d="M8 4C11 3 13 6 11 9C10 11 9 12 9 16" stroke="#8a78b0" stroke-width="2.5" fill="none"/><circle cx="10" cy="7" r="3" fill="#9a8ac0"/></svg>
<div class="t" style="left:840px;top:501px;font-size:11px;font-style:italic;color:#eee">背景</div>
<svg class="a" style="left:956px;top:500px" width="12" height="12"><rect x="1.5" y="5.5" width="9" height="6" fill="none" stroke="#c0c0c0" stroke-width="1.2"/><path d="M3.5 5.5V3.5C3.5 0.5 8.5 0.5 8.5 3.5V5.5" fill="none" stroke="#c0c0c0" stroke-width="1.2"/><rect x="5" y="7" width="2" height="3" fill="#c0c0c0"/></svg>
<!-- layers bottom bar -->
<div class="a" style="left:779px;top:687px;width:216px;height:16px;background:#535353;border-top:1px solid #3e3e3e"></div>
<svg class="a" style="left:800px;top:688px" width="180" height="15" fill="#b8b8b8" stroke="#b8b8b8">
  <path d="M13 7H21" stroke-width="1.3"/><rect x="10.5" y="4.5" width="6" height="6" rx="3" fill="none" stroke-width="1.3"/><rect x="17.5" y="4.5" width="6" height="6" rx="3" fill="none" stroke-width="1.3"/>
  <text x="38" y="12" font-family="Liberation Serif" font-style="italic" font-size="13" stroke="none">fx</text><rect x="50" y="11" width="2" height="2" stroke="none"/>
  <rect x="60" y="2" width="13" height="10" stroke="none"/><circle cx="66.5" cy="7" r="3" fill="#444" stroke="none"/>
  <circle cx="91.5" cy="7" r="5" stroke="none"/><path d="M88 10L95 4" stroke="#535353" stroke-width="1.5"/><rect x="97" y="11" width="2" height="2" stroke="none"/>
  <path d="M109 3H114L115 4.5H122V12H109Z" stroke="none"/>
  <path d="M134 3H145V13H134Z" stroke="none"/><path d="M134 3V8L139 3Z" fill="#535353" stroke="none"/>
  <path d="M159 4.5H170M162.5 4.5V3H166.5V4.5" fill="none" stroke-width="1.2"/><path d="M160.5 6V13.5H168.5V6Z" fill="none" stroke-width="1.1"/><path d="M163 7V12.5M164.5 7V12.5M166 7V12.5" stroke-width="0.9"/>
</svg>

<!-- canvas image -->
<div class="a" style="left:456px;top:116px;width:5px;height:542px;background:#1f1f1f"></div>
<svg class="a" style="left:95px;top:113px" width="361" height="542" viewBox="95 113 361 542">
<defs>
 <linearGradient id="bgG" x1="0" y1="0" x2="0" y2="1">
  <stop offset="0" stop-color="#ede8e8"/><stop offset="0.3" stop-color="#ebe5e3"/><stop offset="0.58" stop-color="#e8e2dc"/><stop offset="0.8" stop-color="#e0d9d1"/><stop offset="1" stop-color="#d5cdc3"/>
 </linearGradient>
 <radialGradient id="pinkG" gradientUnits="userSpaceOnUse" cx="185" cy="200" r="160">
  <stop offset="0" stop-color="#e8cdd6" stop-opacity="0.55"/><stop offset="0.6" stop-color="#e8d4da" stop-opacity="0.3"/><stop offset="1" stop-color="#eadcdc" stop-opacity="0"/>
 </radialGradient>
 <filter id="blur6" x="-50%" y="-50%" width="200%" height="200%"><feGaussianBlur stdDeviation="4"/></filter>
 <filter id="blur2" x="-30%" y="-30%" width="160%" height="160%"><feGaussianBlur stdDeviation="1.2"/></filter>
 <linearGradient id="txtG" gradientUnits="userSpaceOnUse" x1="0" y1="172" x2="0" y2="400">
  <stop offset="0" stop-color="#70489a"/><stop offset="0.25" stop-color="#8462a8"/><stop offset="0.42" stop-color="#a8a4cc"/><stop offset="0.58" stop-color="#b0b6d4"/><stop offset="0.64" stop-color="#8060a4"/><stop offset="1" stop-color="#4e2676"/>
 </linearGradient>
 <linearGradient id="pgB" x1="0" x2="1"><stop offset="0" stop-color="#4a86cc"/><stop offset="0.5" stop-color="#8ab4e2"/><stop offset="1" stop-color="#e0ecf6"/></linearGradient>
 <linearGradient id="pgP" x1="0" x2="1"><stop offset="0" stop-color="#7a66c0"/><stop offset="0.5" stop-color="#aaa0dc"/><stop offset="1" stop-color="#e6e2f6"/></linearGradient>
 <linearGradient id="pgW" x1="0" x2="1"><stop offset="0" stop-color="#a8bce4"/><stop offset="0.5" stop-color="#dde4f2"/><stop offset="1" stop-color="#faf6f6"/></linearGradient>
 <radialGradient id="petB" cx="0.3" cy="0.5" r="0.8"><stop offset="0" stop-color="#dce8f6"/><stop offset="1" stop-color="#6a9ad2"/></radialGradient>
 <radialGradient id="petP" cx="0.3" cy="0.5" r="0.8"><stop offset="0" stop-color="#e6e0f6"/><stop offset="1" stop-color="#9484d2"/></radialGradient>
 <radialGradient id="petW" cx="0.3" cy="0.5" r="0.8"><stop offset="0" stop-color="#faf6f8"/><stop offset="1" stop-color="#bccbe6"/></radialGradient>
</defs>
<rect x="95" y="113" width="361" height="542" fill="url(#bgG)"/>
<rect x="95" y="113" width="361" height="542" fill="url(#pinkG)"/>
<!-- peony -->
<g filter="url(#blur6)">
 <ellipse cx="210" cy="185" rx="110" ry="95" fill="#e8d2da" opacity="0.35"/>
 <ellipse cx="140" cy="250" rx="40" ry="60" fill="#eadade" opacity="0.3"/>
 <ellipse cx="230" cy="285" rx="55" ry="35" fill="#e8d8dc" opacity="0.3"/>
 <ellipse cx="215" cy="170" rx="45" ry="38" fill="#e4cad4" opacity="0.35"/>
</g>
<g filter="url(#blur2)" fill="none" stroke="#f6eef2" opacity="0.8">
 <path d="M168 170C160 150 168 132 182 125C192 120 205 122 210 130" stroke-width="3"/>
 <path d="M212 128C220 115 240 112 255 120C262 126 262 135 256 142" stroke-width="3"/>
 <path d="M255 142C268 150 272 165 266 180" stroke-width="2.5"/>
 <path d="M160 175C150 185 155 200 170 205C185 212 205 210 215 200" stroke-width="2.5"/>
 <path d="M190 145C200 138 215 138 225 146" stroke-width="2"/>
 <path d="M150 118C140 112 128 116 122 126" stroke-width="2.5"/>
 <path d="M118 160C110 185 118 215 140 230" stroke-width="2"/>
 <path d="M180 228C195 245 225 252 250 246C262 242 272 234 276 224" stroke-width="2"/>
</g>
<g filter="url(#blur6)" fill="#f2e8ec" opacity="0.5">
 <ellipse cx="230" cy="130" rx="30" ry="14" transform="rotate(15 230 130)"/>
 <ellipse cx="185" cy="140" rx="20" ry="12" transform="rotate(-40 185 140)"/>
 <ellipse cx="190" cy="200" rx="25" ry="10" transform="rotate(10 190 200)"/>
</g>
<!-- hairpin stick -->
<path d="M95 264.5L305 223.5" stroke="#7a5040" stroke-width="4.8" stroke-linecap="round"/>
<path d="M95 262.5L305 221.5" stroke="#c0a090" stroke-width="1" opacity="0.8"/>
<!-- flowers -->
<g filter="url(#blur6)">
 <ellipse cx="335" cy="195" rx="60" ry="55" fill="#a8a4dc" opacity="0.45"/>
 <ellipse cx="300" cy="265" rx="42" ry="45" fill="#3a78c4" opacity="0.75"/>
 <ellipse cx="375" cy="250" rx="28" ry="26" fill="#90b4e0" opacity="0.4"/>
</g>
<g stroke="#8f7050" stroke-width="1.1" stroke-opacity="0.85">
<ellipse cx="254.5" cy="216.2" rx="14.8" ry="10.0" transform="rotate(124 254.5 216.2)" fill="url(#pgP)" fill-opacity="0.64"/>
<ellipse cx="248.8" cy="200.0" rx="15.5" ry="10.0" transform="rotate(201 248.8 200.0)" fill="url(#pgP)" fill-opacity="0.64"/>
<ellipse cx="262.3" cy="191.0" rx="15.5" ry="10.0" transform="rotate(271 262.3 191.0)" fill="url(#pgP)" fill-opacity="0.64"/>
<ellipse cx="271.9" cy="197.2" rx="13.8" ry="10.0" transform="rotate(322 271.9 197.2)" fill="url(#pgP)" fill-opacity="0.64"/>
<ellipse cx="268.3" cy="216.5" rx="14.5" ry="10.0" transform="rotate(421 268.3 216.5)" fill="url(#pgP)" fill-opacity="0.64"/>
<circle cx="262" cy="205" r="3" fill="#c8985a" stroke="none"/>
<ellipse cx="349.6" cy="226.4" rx="12.6" ry="10.0" transform="rotate(92 349.6 226.4)" fill="url(#pgB)" fill-opacity="0.68"/>
<ellipse cx="339.6" cy="220.7" rx="13.0" ry="10.0" transform="rotate(151 339.6 220.7)" fill="url(#pgB)" fill-opacity="0.68"/>
<ellipse cx="340.9" cy="205.8" rx="14.2" ry="10.0" transform="rotate(225 340.9 205.8)" fill="url(#pgB)" fill-opacity="0.68"/>
<ellipse cx="352.3" cy="203.5" rx="12.9" ry="10.0" transform="rotate(281 352.3 203.5)" fill="url(#pgB)" fill-opacity="0.68"/>
<ellipse cx="364.0" cy="215.3" rx="15.4" ry="10.0" transform="rotate(361 364.0 215.3)" fill="url(#pgB)" fill-opacity="0.68"/>
<circle cx="350" cy="215" r="3" fill="#c8985a" stroke="none"/>
<ellipse cx="387.3" cy="208.0" rx="10.8" ry="7.0" transform="rotate(18 387.3 208.0)" fill="url(#pgP)" fill-opacity="0.56"/>
<ellipse cx="377.8" cy="214.7" rx="10.7" ry="7.0" transform="rotate(91 377.8 214.7)" fill="url(#pgP)" fill-opacity="0.56"/>
<ellipse cx="369.0" cy="208.7" rx="10.7" ry="7.0" transform="rotate(158 369.0 208.7)" fill="url(#pgP)" fill-opacity="0.56"/>
<ellipse cx="367.9" cy="198.9" rx="12.9" ry="7.0" transform="rotate(211 367.9 198.9)" fill="url(#pgP)" fill-opacity="0.56"/>
<ellipse cx="381.3" cy="195.6" rx="10.9" ry="7.0" transform="rotate(289 381.3 195.6)" fill="url(#pgP)" fill-opacity="0.56"/>
<circle cx="378" cy="205" r="3" fill="#c8985a" stroke="none"/>
<ellipse cx="380.4" cy="308.2" rx="12.9" ry="9.0" transform="rotate(44 380.4 308.2)" fill="url(#pgW)" fill-opacity="0.60"/>
<ellipse cx="370.8" cy="311.9" rx="13.2" ry="9.0" transform="rotate(96 370.8 311.9)" fill="url(#pgW)" fill-opacity="0.60"/>
<ellipse cx="360.8" cy="300.9" rx="12.3" ry="9.0" transform="rotate(175 360.8 300.9)" fill="url(#pgW)" fill-opacity="0.60"/>
<ellipse cx="365.5" cy="290.0" rx="13.1" ry="9.0" transform="rotate(237 365.5 290.0)" fill="url(#pgW)" fill-opacity="0.60"/>
<ellipse cx="381.7" cy="292.9" rx="13.2" ry="9.0" transform="rotate(324 381.7 292.9)" fill="url(#pgW)" fill-opacity="0.60"/>
<circle cx="372" cy="300" r="3" fill="#c8985a" stroke="none"/>
<ellipse cx="331.7" cy="247.5" rx="16.3" ry="12.0" transform="rotate(22 331.7 247.5)" fill="url(#pgB)" fill-opacity="0.76"/>
<ellipse cx="321.0" cy="255.9" rx="15.7" ry="12.0" transform="rotate(78 321.0 255.9)" fill="url(#pgB)" fill-opacity="0.76"/>
<ellipse cx="306.9" cy="250.3" rx="15.2" ry="12.0" transform="rotate(143 306.9 250.3)" fill="url(#pgB)" fill-opacity="0.76"/>
<ellipse cx="305.7" cy="231.7" rx="17.6" ry="12.0" transform="rotate(220 305.7 231.7)" fill="url(#pgB)" fill-opacity="0.76"/>
<ellipse cx="321.7" cy="226.1" rx="17.9" ry="12.0" transform="rotate(283 321.7 226.1)" fill="url(#pgB)" fill-opacity="0.76"/>
<circle cx="318" cy="242" r="3" fill="#c8985a" stroke="none"/>
<ellipse cx="282.9" cy="255.1" rx="13.3" ry="10.0" transform="rotate(25 282.9 255.1)" fill="url(#pgB)" fill-opacity="0.72"/>
<ellipse cx="267.4" cy="261.7" rx="13.9" ry="10.0" transform="rotate(112 267.4 261.7)" fill="url(#pgB)" fill-opacity="0.72"/>
<ellipse cx="259.6" cy="252.5" rx="13.9" ry="10.0" transform="rotate(168 259.6 252.5)" fill="url(#pgB)" fill-opacity="0.72"/>
<ellipse cx="268.6" cy="239.3" rx="12.4" ry="10.0" transform="rotate(252 268.6 239.3)" fill="url(#pgB)" fill-opacity="0.72"/>
<ellipse cx="281.8" cy="244.8" rx="12.2" ry="10.0" transform="rotate(332 281.8 244.8)" fill="url(#pgB)" fill-opacity="0.72"/>
<circle cx="272" cy="250" r="3" fill="#c8985a" stroke="none"/>
<ellipse cx="314.5" cy="288.8" rx="16.3" ry="10.0" transform="rotate(-13 314.5 288.8)" fill="url(#pgB)" fill-opacity="0.68"/>
<ellipse cx="311.6" cy="300.9" rx="16.1" ry="10.0" transform="rotate(38 311.6 300.9)" fill="url(#pgB)" fill-opacity="0.68"/>
<ellipse cx="293.0" cy="304.1" rx="15.3" ry="10.0" transform="rotate(120 293.0 304.1)" fill="url(#pgB)" fill-opacity="0.68"/>
<ellipse cx="287.9" cy="291.7" rx="13.3" ry="10.0" transform="rotate(181 287.9 291.7)" fill="url(#pgB)" fill-opacity="0.68"/>
<ellipse cx="296.9" cy="277.1" rx="16.8" ry="10.0" transform="rotate(258 296.9 277.1)" fill="url(#pgB)" fill-opacity="0.68"/>
<circle cx="300" cy="292" r="3" fill="#c8985a" stroke="none"/>
<ellipse cx="274.7" cy="178.7" rx="19.4" ry="13.0" transform="rotate(191 274.7 178.7)" fill="url(#pgP)" fill-opacity="0.68"/>
<ellipse cx="296.7" cy="164.2" rx="20.3" ry="13.0" transform="rotate(285 296.7 164.2)" fill="url(#pgP)" fill-opacity="0.68"/>
<ellipse cx="306.9" cy="176.4" rx="17.6" ry="13.0" transform="rotate(339 306.9 176.4)" fill="url(#pgP)" fill-opacity="0.68"/>
<ellipse cx="301.7" cy="196.8" rx="19.5" ry="13.0" transform="rotate(417 301.7 196.8)" fill="url(#pgP)" fill-opacity="0.68"/>
<ellipse cx="284.2" cy="197.8" rx="19.4" ry="13.0" transform="rotate(476 284.2 197.8)" fill="url(#pgP)" fill-opacity="0.68"/>
<circle cx="292" cy="182" r="3" fill="#c8985a" stroke="none"/>
<ellipse cx="332.3" cy="141.2" rx="21.1" ry="13.5" transform="rotate(259 332.3 141.2)" fill="url(#pgP)" fill-opacity="0.68"/>
<ellipse cx="348.1" cy="144.6" rx="21.5" ry="13.5" transform="rotate(308 348.1 144.6)" fill="url(#pgP)" fill-opacity="0.68"/>
<ellipse cx="351.6" cy="166.2" rx="18.5" ry="13.5" transform="rotate(382 351.6 166.2)" fill="url(#pgP)" fill-opacity="0.68"/>
<ellipse cx="329.6" cy="178.3" rx="21.4" ry="13.5" transform="rotate(469 329.6 178.3)" fill="url(#pgP)" fill-opacity="0.68"/>
<ellipse cx="316.7" cy="162.3" rx="21.4" ry="13.5" transform="rotate(533 316.7 162.3)" fill="url(#pgP)" fill-opacity="0.68"/>
<circle cx="336" cy="160" r="3" fill="#c8985a" stroke="none"/>
<ellipse cx="361.8" cy="150.5" rx="12.3" ry="9.0" transform="rotate(301 361.8 150.5)" fill="url(#pgB)" fill-opacity="0.60"/>
<ellipse cx="366.7" cy="161.2" rx="11.8" ry="9.0" transform="rotate(367 366.7 161.2)" fill="url(#pgB)" fill-opacity="0.60"/>
<ellipse cx="359.4" cy="170.1" rx="11.7" ry="9.0" transform="rotate(431 359.4 170.1)" fill="url(#pgB)" fill-opacity="0.60"/>
<ellipse cx="343.5" cy="164.1" rx="14.5" ry="9.0" transform="rotate(522 343.5 164.1)" fill="url(#pgB)" fill-opacity="0.60"/>
<ellipse cx="347.8" cy="153.7" rx="11.4" ry="9.0" transform="rotate(578 347.8 153.7)" fill="url(#pgB)" fill-opacity="0.60"/>
<circle cx="356" cy="160" r="3" fill="#c8985a" stroke="none"/>
<ellipse cx="389.1" cy="222.8" rx="17.3" ry="7.0" transform="rotate(55 389.1 222.8)" fill="url(#pgP)" fill-opacity="0.64"/>
<ellipse cx="375.2" cy="223.7" rx="16.0" ry="7.0" transform="rotate(109 375.2 223.7)" fill="url(#pgP)" fill-opacity="0.64"/>
<ellipse cx="363.2" cy="208.0" rx="18.6" ry="7.0" transform="rotate(187 363.2 208.0)" fill="url(#pgP)" fill-opacity="0.64"/>
<ellipse cx="376.0" cy="195.3" rx="16.8" ry="7.0" transform="rotate(255 376.0 195.3)" fill="url(#pgP)" fill-opacity="0.64"/>
<ellipse cx="392.1" cy="197.7" rx="19.0" ry="7.0" transform="rotate(315 392.1 197.7)" fill="url(#pgP)" fill-opacity="0.64"/>
<circle cx="380" cy="210" r="3" fill="#c8985a" stroke="none"/>
<ellipse cx="373.5" cy="247.5" rx="16.1" ry="11.0" transform="rotate(6 373.5 247.5)" fill="url(#pgB)" fill-opacity="0.68"/>
<ellipse cx="356.2" cy="258.9" rx="14.6" ry="11.0" transform="rotate(102 356.2 258.9)" fill="url(#pgB)" fill-opacity="0.68"/>
<ellipse cx="342.9" cy="248.6" rx="17.9" ry="11.0" transform="rotate(171 342.9 248.6)" fill="url(#pgB)" fill-opacity="0.68"/>
<ellipse cx="351.1" cy="232.4" rx="17.3" ry="11.0" transform="rotate(240 351.1 232.4)" fill="url(#pgB)" fill-opacity="0.68"/>
<ellipse cx="365.3" cy="233.1" rx="15.8" ry="11.0" transform="rotate(296 365.3 233.1)" fill="url(#pgB)" fill-opacity="0.68"/>
<circle cx="359" cy="246" r="3" fill="#c8985a" stroke="none"/>
<ellipse cx="375.0" cy="288.5" rx="15.2" ry="11.0" transform="rotate(49 375.0 288.5)" fill="url(#pgW)" fill-opacity="0.68"/>
<ellipse cx="358.7" cy="288.2" rx="13.8" ry="11.0" transform="rotate(126 358.7 288.2)" fill="url(#pgW)" fill-opacity="0.68"/>
<ellipse cx="355.3" cy="269.3" rx="15.2" ry="11.0" transform="rotate(219 355.3 269.3)" fill="url(#pgW)" fill-opacity="0.68"/>
<ellipse cx="370.3" cy="266.3" rx="13.8" ry="11.0" transform="rotate(290 370.3 266.3)" fill="url(#pgW)" fill-opacity="0.68"/>
<ellipse cx="379.1" cy="275.1" rx="14.8" ry="11.0" transform="rotate(348 379.1 275.1)" fill="url(#pgW)" fill-opacity="0.68"/>
<circle cx="366" cy="278" r="3" fill="#c8985a" stroke="none"/>
<ellipse cx="332.8" cy="333.6" rx="15.2" ry="11.0" transform="rotate(-6 332.8 333.6)" fill="url(#pgW)" fill-opacity="0.64"/>
<ellipse cx="324.8" cy="347.0" rx="14.6" ry="11.0" transform="rotate(64 324.8 347.0)" fill="url(#pgW)" fill-opacity="0.64"/>
<ellipse cx="307.3" cy="346.6" rx="18.1" ry="11.0" transform="rotate(135 307.3 346.6)" fill="url(#pgW)" fill-opacity="0.64"/>
<ellipse cx="308.3" cy="324.4" rx="16.6" ry="11.0" transform="rotate(225 308.3 324.4)" fill="url(#pgW)" fill-opacity="0.64"/>
<ellipse cx="322.1" cy="321.3" rx="15.4" ry="11.0" transform="rotate(283 322.1 321.3)" fill="url(#pgW)" fill-opacity="0.64"/>
<circle cx="319" cy="335" r="3" fill="#c8985a" stroke="none"/>
<ellipse cx="354.2" cy="317.6" rx="10.1" ry="7.0" transform="rotate(-2 354.2 317.6)" fill="url(#pgB)" fill-opacity="0.56"/>
<ellipse cx="341.6" cy="328.1" rx="11.7" ry="7.0" transform="rotate(108 341.6 328.1)" fill="url(#pgB)" fill-opacity="0.56"/>
<ellipse cx="334.6" cy="316.9" rx="11.5" ry="7.0" transform="rotate(186 334.6 316.9)" fill="url(#pgB)" fill-opacity="0.56"/>
<ellipse cx="348.2" cy="308.3" rx="11.3" ry="7.0" transform="rotate(288 348.2 308.3)" fill="url(#pgB)" fill-opacity="0.56"/>
<circle cx="345" cy="318" r="3" fill="#c8985a" stroke="none"/>
<ellipse cx="302.8" cy="568.2" rx="16.0" ry="9.0" transform="rotate(155 302.8 568.2)" fill="url(#pgB)" fill-opacity="0.64"/>
<ellipse cx="307.9" cy="550.1" rx="15.8" ry="9.0" transform="rotate(236 307.9 550.1)" fill="url(#pgB)" fill-opacity="0.64"/>
<ellipse cx="326.9" cy="553.9" rx="15.0" ry="9.0" transform="rotate(323 326.9 553.9)" fill="url(#pgB)" fill-opacity="0.64"/>
<ellipse cx="321.3" cy="575.3" rx="15.7" ry="9.0" transform="rotate(428 321.3 575.3)" fill="url(#pgB)" fill-opacity="0.64"/>
<circle cx="316" cy="562" r="3" fill="#c8985a" stroke="none"/>
<ellipse cx="347.5" cy="594.3" rx="10.8" ry="6.0" transform="rotate(14 347.5 594.3)" fill="url(#pgW)" fill-opacity="0.60"/>
<ellipse cx="334.3" cy="600.2" rx="9.9" ry="6.0" transform="rotate(114 334.3 600.2)" fill="url(#pgW)" fill-opacity="0.60"/>
<ellipse cx="329.2" cy="591.2" rx="9.8" ry="6.0" transform="rotate(185 329.2 591.2)" fill="url(#pgW)" fill-opacity="0.60"/>
<ellipse cx="340.0" cy="583.1" rx="10.1" ry="6.0" transform="rotate(283 340.0 583.1)" fill="url(#pgW)" fill-opacity="0.60"/>
<circle cx="338" cy="592" r="3" fill="#c8985a" stroke="none"/>
</g>
<g stroke="#e8eef6" stroke-width="0.8" stroke-opacity="0.6" filter="url(#blur2)">
 <ellipse cx="280" cy="232" rx="18" ry="10" transform="rotate(-30 280 232)" fill="#3f82c8" opacity="0.55"/>
 <ellipse cx="300" cy="270" rx="20" ry="12" transform="rotate(20 300 270)" fill="#2f6cb8" opacity="0.55"/>
 <ellipse cx="330" cy="265" rx="14" ry="10" transform="rotate(-60 330 265)" fill="#3a78c0" opacity="0.5"/>
 <ellipse cx="262" cy="268" rx="12" ry="8" transform="rotate(40 262 268)" fill="#4a8ad0" opacity="0.5"/>
 <ellipse cx="315" cy="300" rx="16" ry="9" transform="rotate(10 315 300)" fill="#3a7cc4" opacity="0.5"/>
</g>
<!-- calligraphy -->
<g fill="none" stroke="#f4f0f6" stroke-linecap="butt" opacity="0.85" id="callS">
<path d="M264 175L248 204" stroke-width="11.5"/>
<path d="M220 208L298 204" stroke-width="11.5"/>
<path d="M231 207V253" stroke-width="11.5"/>
<path d="M289 204V268" stroke-width="12.5"/>
<path d="M234 228L290 226" stroke-width="9.5"/>
<path d="M229 249.5L289 247.5" stroke-width="8.5"/>
<path d="M290 223L339 219" stroke-width="10.5"/>
<path d="M315 220V282" stroke-width="12.5"/>
<path d="M296 248.5L337 246" stroke-width="10.5"/>
<path d="M343 257L351 268" stroke-width="8.5"/>
<path d="M246 286L366 277" stroke-width="10.5"/>
<path d="M219 245L199 271" stroke-width="9.0"/>
<path d="M212 262L223 267" stroke-width="8.5"/>
<path d="M221 254L256 250" stroke-width="9.0"/>
<path d="M256 241L238 269" stroke-width="9.0"/>
<path d="M199 282L228 277" stroke-width="9.0"/>
<path d="M213 278V293" stroke-width="9.0"/>
<path d="M201 293.5L223 291" stroke-width="9.0"/>
<path d="M215 295L193 324" stroke-width="9.5"/>
<path d="M226 291V310L239 306" stroke-width="9.0"/>
<path d="M256 288L233 314" stroke-width="9.5"/>
<path d="M262.5 288V306L291 307V301" stroke-width="9.5"/>
<path d="M245 270.5L260 268" stroke-width="9.0"/>
<path d="M223.5 318V353" stroke-width="10.5"/>
<path d="M218 321L256 317" stroke-width="10.5"/>
<path d="M253 317V390L251 400" stroke-width="11.5"/>
<path d="M222 333L251 330" stroke-width="9.5"/>
<path d="M220 347L251 344" stroke-width="9.5"/>
</g>
<g fill="none" stroke="url(#txtG)" stroke-linecap="butt">
<path d="M264 175L248 204" stroke-width="9"/>
<path d="M220 208L298 204" stroke-width="9"/>
<path d="M231 207V253" stroke-width="9"/>
<path d="M289 204V268" stroke-width="10"/>
<path d="M234 228L290 226" stroke-width="7"/>
<path d="M229 249.5L289 247.5" stroke-width="6"/>
<path d="M290 223L339 219" stroke-width="8"/>
<path d="M315 220V282" stroke-width="10"/>
<path d="M296 248.5L337 246" stroke-width="8"/>
<path d="M343 257L351 268" stroke-width="6"/>
<path d="M246 286L366 277" stroke-width="8"/>
<path d="M219 245L199 271" stroke-width="6.5"/>
<path d="M212 262L223 267" stroke-width="6.0"/>
<path d="M221 254L256 250" stroke-width="6.5"/>
<path d="M256 241L238 269" stroke-width="6.5"/>
<path d="M199 282L228 277" stroke-width="6.5"/>
<path d="M213 278V293" stroke-width="6.5"/>
<path d="M201 293.5L223 291" stroke-width="6.5"/>
<path d="M215 295L193 324" stroke-width="7.0"/>
<path d="M226 291V310L239 306" stroke-width="6.5"/>
<path d="M256 288L233 314" stroke-width="7.0"/>
<path d="M262.5 288V306L291 307V301" stroke-width="7.0"/>
<path d="M245 270.5L260 268" stroke-width="6.5"/>
<path d="M223.5 318V353" stroke-width="8"/>
<path d="M218 321L256 317" stroke-width="8"/>
<path d="M253 317V390L251 400" stroke-width="9"/>
<path d="M222 333L251 330" stroke-width="7"/>
<path d="M220 347L251 344" stroke-width="7"/>
</g>
<!-- dangling chain -->
<path d="M326 355C327 400 330 450 327 520C326 560 328 590 328 605" stroke="#a88050" stroke-width="1.6" fill="none"/>
<g stroke="#8f7050" stroke-width="1" stroke-opacity="0.8">
 <ellipse cx="303" cy="396" rx="21" ry="10" transform="rotate(-8 303 396)" fill="url(#pgB)" fill-opacity="0.6" style="fill:#a8cce8"/>
 <ellipse cx="312" cy="410" rx="13" ry="10" transform="rotate(55 312 410)" fill="#cfe2f2" fill-opacity="0.75"/>
 <ellipse cx="340" cy="392" rx="13" ry="8" transform="rotate(-65 340 392)" fill="#c8c4ec" fill-opacity="0.7"/>
 <ellipse cx="340" cy="410" rx="11" ry="9" transform="rotate(30 340 410)" fill="#b8b4e4" fill-opacity="0.7"/>
 <ellipse cx="322" cy="443" rx="13" ry="8" transform="rotate(200 322 443)" fill="#a88ed8" fill-opacity="0.7"/>
 <ellipse cx="345" cy="444" rx="15" ry="11" transform="rotate(-20 345 444)" fill="#b4a0e0" fill-opacity="0.7"/>
 <ellipse cx="346" cy="458" rx="13" ry="10" transform="rotate(30 346 458)" fill="#c8bcec" fill-opacity="0.7"/>
 <ellipse cx="317" cy="456" rx="10" ry="7" transform="rotate(160 317 456)" fill="#b8a4dc" fill-opacity="0.7"/>
</g>
<ellipse cx="330" cy="467" rx="10" ry="12" fill="#f6eeea" stroke="#d8c8c0" stroke-width="0.8"/>
<g fill="#c8a060"><circle cx="327" cy="488" r="2"/><circle cx="329" cy="496" r="2.3"/><circle cx="325" cy="505" r="2"/><circle cx="330" cy="512" r="2"/><circle cx="326" cy="372" r="2"/><circle cx="327" cy="382" r="2"/><circle cx="326" cy="525" r="2"/><circle cx="324" cy="412" r="2"/><circle cx="328" cy="420" r="2"/></g>
<g fill="#e8d0e0"><circle cx="337" cy="492" r="1.5"/><circle cx="340" cy="512" r="1.5"/><circle cx="346" cy="525" r="1.5"/><circle cx="312" cy="470" r="1.5"/></g>
<g><circle cx="325.4" cy="358" r="1.6" fill="#e0c080"/><circle cx="329.5" cy="362" r="2.2" fill="#b89060"/><circle cx="324.4" cy="366" r="2.5" fill="#c8a060"/><circle cx="326.8" cy="370" r="1.8" fill="#e0c080"/><circle cx="330.0" cy="374" r="2.1" fill="#b89060"/><circle cx="327.3" cy="378" r="2.2" fill="#b89060"/><circle cx="324.9" cy="418" r="2.5" fill="#d4b070"/><circle cx="327.1" cy="422" r="2.2" fill="#c8a060"/><circle cx="324.4" cy="426" r="1.5" fill="#e0c080"/><circle cx="328.7" cy="430" r="2.0" fill="#8a6a48"/><circle cx="328.3" cy="476" r="2.3" fill="#b89060"/><circle cx="329.5" cy="480" r="2.3" fill="#b89060"/><circle cx="327.5" cy="484" r="2.5" fill="#d4b070"/><circle cx="324.6" cy="488" r="2.0" fill="#d4b070"/><circle cx="325.5" cy="492" r="2.4" fill="#b89060"/><circle cx="329.1" cy="496" r="2.1" fill="#b89060"/><circle cx="326.3" cy="500" r="2.1" fill="#8a6a48"/><circle cx="326.4" cy="504" r="2.5" fill="#d4b070"/><circle cx="328.1" cy="508" r="2.4" fill="#c8a060"/><circle cx="329.9" cy="512" r="2.3" fill="#d4b070"/><circle cx="326.0" cy="516" r="2.5" fill="#e0c080"/><circle cx="327.4" cy="520" r="2.2" fill="#d4b070"/><circle cx="329.9" cy="524" r="1.8" fill="#8a6a48"/><circle cx="324.4" cy="528" r="1.6" fill="#b89060"/><circle cx="328.8" cy="600" r="2.5" fill="#b89060"/><circle cx="324.1" cy="604" r="2.3" fill="#b89060"/><circle cx="329.2" cy="608" r="2.2" fill="#c8a060"/><circle cx="318.7" cy="488" r="1.6" fill="#ecd4e4"/><circle cx="336.3" cy="500" r="1.6" fill="#ecd4e4"/><circle cx="336.0" cy="515" r="1.6" fill="#ecd4e4"/><circle cx="319.1" cy="528" r="1.6" fill="#ecd4e4"/><circle cx="320.4" cy="372" r="1.6" fill="#ecd4e4"/></g>
<!-- crystal -->
<path d="M327 603C318 608 314 614 315 621C317 630 323 633 329 633C336 632 341 627 341 620C340 612 336 607 327 603Z" fill="#eeeaea" stroke="#c8c0c0" stroke-width="0.8"/>
<path d="M322 612L336 614M320 620L340 622M328 602L326 630M334 606L332 630" stroke="#cfc8c8" stroke-width="0.6"/>
<rect x="455" y="113" width="1" height="542" fill="#f0ece8" opacity="0.6"/>
<rect x="95" y="654" width="361" height="1" fill="#f0ece8" opacity="0.6"/>
</svg>

















<!-- watermark -->
<div class="a" style="left:765px;top:605px;width:180px;height:85px;background:#23325f"></div>
<svg class="a" style="left:840px;top:600px" width="30" height="6"><ellipse cx="7" cy="5.5" rx="5" ry="4" fill="#e8ecf4"/><ellipse cx="23" cy="5.5" rx="4.5" ry="2.5" fill="#dfe3ec"/></svg>
<svg class="a" style="left:776px;top:626px" width="44" height="44"><path d="M6 10V29Q6 41 17 38L34 27Q40 22 34 17L19 6Q13 2 13 9V29Q13 33 19 32" fill="none" stroke="#d4d8e2" stroke-width="3.2" stroke-linecap="round" stroke-linejoin="round"/><path d="M17 18L24 22L17 26Z" fill="#d4d8e2"/><rect x="26" y="19" width="2.2" height="7" fill="#d4d8e2"/></svg>
<div class="t" style="left:825px;top:627px;font-size:25px;font-weight:bold;letter-spacing:1.5px;color:#dde1ea">溜溜自学</div>
<div class="t" style="left:826px;top:656px;font-size:10px;letter-spacing:1.45px;color:#c8ccd8">ZIXUE.3D66.COM</div>

</body></html>
